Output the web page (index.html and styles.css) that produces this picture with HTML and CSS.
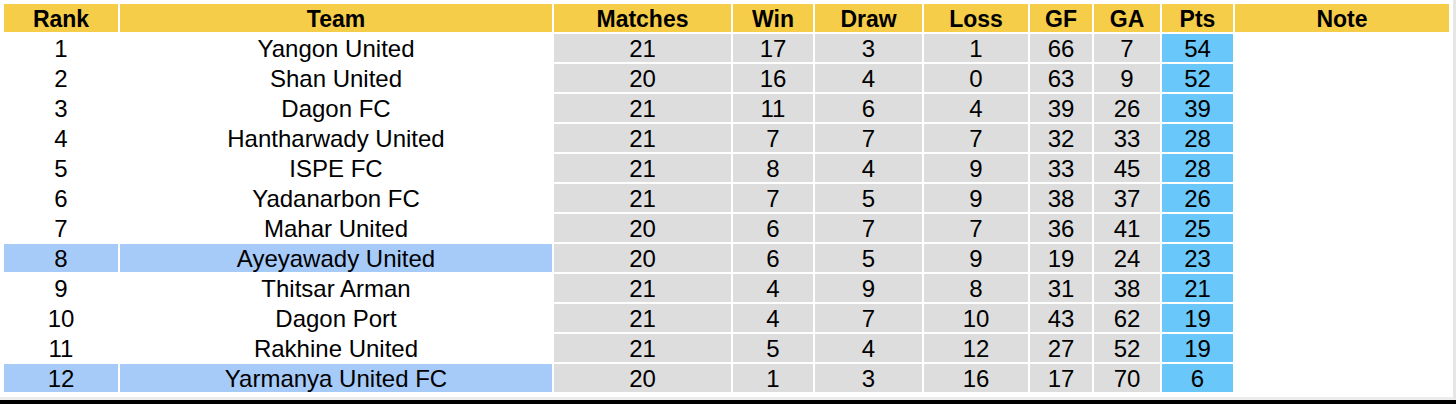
FILE: index.html
```html
<!DOCTYPE html>
<html>
<head>
<meta charset="utf-8">
<link rel="stylesheet" href="styles.css">
</head>
<body>
<div class="sheet">
<table class="standings">
<colgroup>
<col class="c-rank"><col class="c-team"><col class="c-matches"><col class="c-win"><col class="c-draw"><col class="c-loss"><col class="c-gf"><col class="c-ga"><col class="c-pts"><col class="c-note">
</colgroup>
<thead>
<tr><th>Rank</th><th>Team</th><th>Matches</th><th>Win</th><th>Draw</th><th>Loss</th><th>GF</th><th>GA</th><th>Pts</th><th>Note</th></tr>
</thead>
<tbody>
<tr><td class="plain">1</td><td class="plain">Yangon United</td><td>21</td><td>17</td><td>3</td><td>1</td><td>66</td><td>7</td><td class="pts">54</td><td class="note"></td></tr>
<tr><td class="plain">2</td><td class="plain">Shan United</td><td>20</td><td>16</td><td>4</td><td>0</td><td>63</td><td>9</td><td class="pts">52</td><td class="note"></td></tr>
<tr><td class="plain">3</td><td class="plain">Dagon FC</td><td>21</td><td>11</td><td>6</td><td>4</td><td>39</td><td>26</td><td class="pts">39</td><td class="note"></td></tr>
<tr><td class="plain">4</td><td class="plain">Hantharwady United</td><td>21</td><td>7</td><td>7</td><td>7</td><td>32</td><td>33</td><td class="pts">28</td><td class="note"></td></tr>
<tr><td class="plain">5</td><td class="plain">ISPE FC</td><td>21</td><td>8</td><td>4</td><td>9</td><td>33</td><td>45</td><td class="pts">28</td><td class="note"></td></tr>
<tr><td class="plain">6</td><td class="plain">Yadanarbon FC</td><td>21</td><td>7</td><td>5</td><td>9</td><td>38</td><td>37</td><td class="pts">26</td><td class="note"></td></tr>
<tr><td class="plain">7</td><td class="plain">Mahar United</td><td>20</td><td>6</td><td>7</td><td>7</td><td>36</td><td>41</td><td class="pts">25</td><td class="note"></td></tr>
<tr><td class="hl">8</td><td class="hl">Ayeyawady United</td><td>20</td><td>6</td><td>5</td><td>9</td><td>19</td><td>24</td><td class="pts">23</td><td class="note"></td></tr>
<tr><td class="plain">9</td><td class="plain">Thitsar Arman</td><td>21</td><td>4</td><td>9</td><td>8</td><td>31</td><td>38</td><td class="pts">21</td><td class="note"></td></tr>
<tr><td class="plain">10</td><td class="plain">Dagon Port</td><td>21</td><td>4</td><td>7</td><td>10</td><td>43</td><td>62</td><td class="pts">19</td><td class="note"></td></tr>
<tr><td class="plain">11</td><td class="plain">Rakhine United</td><td>21</td><td>5</td><td>4</td><td>12</td><td>27</td><td>52</td><td class="pts">19</td><td class="note"></td></tr>
<tr><td class="hl">12</td><td class="hl">Yarmanya United FC</td><td>20</td><td>1</td><td>3</td><td>16</td><td>17</td><td>70</td><td class="pts">6</td><td class="note"></td></tr>
</tbody>
</table>
</div>
<div class="bottom-bar"></div>
</body>
</html>
```

FILE: styles.css
```css
html, body {
  margin: 0;
  padding: 0;
  background: #ffffff;
}

body {
  width: 1456px;
  height: 404px;
  overflow: hidden;
  font-family: "Liberation Sans", Arial, sans-serif;
  color: #000;
}

.sheet {
  box-sizing: border-box;
  width: 1456px;
  height: 400px;
  padding: 2px 0 0 2px;
  border-right: 3px solid #e6e6e6;
  border-bottom: 3px solid #ececec;
}

.standings {
  border-collapse: separate;
  border-spacing: 2px;
  table-layout: fixed;
  width: 1449px;
}

.c-rank { width: 114px; }
.c-team { width: 432px; }
.c-matches { width: 177px; }
.c-win { width: 80px; }
.c-draw { width: 107px; }
.c-loss { width: 104px; }
.c-gf { width: 62px; }
.c-ga { width: 66px; }
.c-pts { width: 71px; }
.c-note { width: 214px; }

.standings th,
.standings td {
  box-sizing: border-box;
  height: 28px;
  padding: 2px 0 0 0;
  text-align: center;
  vertical-align: middle;
  line-height: 26px;
  white-space: nowrap;
  overflow: hidden;
}

.standings th {
  background: #f6cd48;
  font-weight: bold;
  font-size: 23px;
}

.standings td {
  background: #dddddd;
  font-size: 24px;
}

.standings td.plain,
.standings td.note {
  background: #ffffff;
}

.standings td.hl {
  background: #a7cbf8;
}

.standings td.pts {
  background: #6ac7f9;
}

.bottom-bar {
  height: 4px;
  background: #000;
}
```
